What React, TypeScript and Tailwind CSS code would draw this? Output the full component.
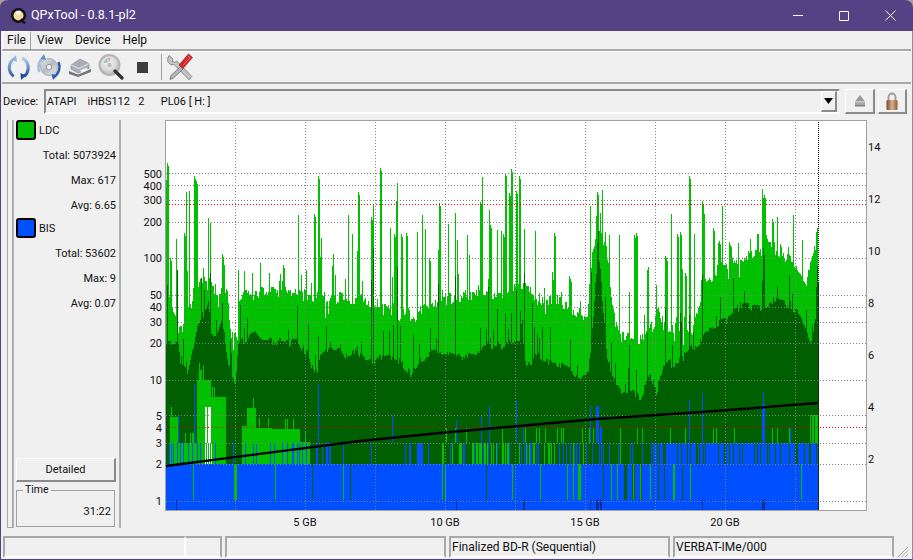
import React from "react";

const font = { light: "#00c000", dark: "#005f00", blue: "#0050ff", navy: "#0a2f96" };

// pseudo random, fixed seed so the plot stays the same on each run
let seed = 20240611;
const rnd = () => {
  seed = (seed * 1664525 + 1013904223) >>> 0;
  return seed / 4294967296;
};

const lerp = (pts: number[][], x: number) => {
  for (let i = 1; i < pts.length; i++) {
    if (x <= pts[i][0]) {
      const [x0, y0] = pts[i - 1];
      const [x1, y1] = pts[i];
      return y0 + ((y1 - y0) * (x - x0)) / (x1 - x0 || 1);
    }
  }
  return pts[pts.length - 1][1];
};

const lightBody = [
  [166, 292], [170, 305], [175, 315], [179, 332], [182, 330], [186, 310], [192, 300], [194, 286], [200, 282], [208, 274],
  [212, 290], [222, 288], [228, 298], [230, 332], [237, 336], [238, 302], [245, 296], [260, 292], [280, 292], [300, 294],
  [310, 297], [340, 297], [350, 301], [365, 300], [385, 306], [395, 322], [405, 308], [412, 322], [420, 308], [440, 301],
  [470, 294], [485, 293], [500, 293], [515, 288], [525, 288], [535, 295], [540, 303], [555, 298], [565, 305], [580, 313],
  [586, 322], [589, 290], [592, 250], [598, 232], [605, 240], [608, 262], [612, 305], [620, 337], [640, 340], [650, 332],
  [658, 312], [668, 334], [680, 320], [690, 338], [700, 300], [710, 278], [720, 266], [740, 258], [760, 254], [765, 240],
  [770, 240], [775, 250], [790, 260], [800, 272], [806, 282], [812, 262], [818, 232],
];

const darkBody = [
  [166, 343], [178, 343], [180, 368], [188, 372], [192, 352], [197, 325], [208, 303], [211, 336], [216, 336], [222, 318],
  [228, 368], [235, 380], [238, 342], [245, 341], [255, 331], [262, 342], [298, 343], [308, 355], [315, 378], [320, 356],
  [330, 346], [340, 346], [346, 357], [355, 351], [365, 362], [385, 358], [400, 360], [410, 375], [420, 358], [440, 351],
  [455, 355], [475, 358], [480, 346], [500, 345], [520, 340], [526, 368], [535, 355], [545, 360], [560, 366], [570, 370],
  [580, 380], [588, 372], [590, 350], [594, 305], [597, 252], [600, 272], [603, 312], [606, 352], [612, 380], [620, 392],
  [640, 396], [650, 376], [656, 392], [663, 366], [680, 360], [700, 340], [710, 328], [720, 323], [730, 317], [740, 306],
  [760, 308], [775, 300], [790, 305], [800, 316], [810, 342], [815, 320], [818, 280],
];

const lightSpikes = [
  [166, 180], [167, 163], [170, 258], [176, 239], [184, 233], [186, 192], [189, 191], [194, 176], [196, 181], [208, 254], [210, 223],
  [222, 254], [283, 265], [298, 215], [301, 275], [314, 214], [318, 176], [333, 254], [348, 215], [352, 234], [358, 192],
  [371, 217], [373, 204], [380, 168], [390, 228], [394, 234], [396, 201], [397, 183], [401, 234], [406, 233], [417, 232],
  [422, 215], [425, 229], [429, 258], [438, 250], [439, 203], [448, 224], [455, 213], [457, 240], [467, 235], [480, 202],
  [482, 177], [489, 210], [490, 225], [497, 230], [501, 231], [503, 234], [505, 173], [509, 193], [511, 169], [516, 191],
  [519, 176], [524, 229], [535, 231], [554, 233], [570, 279], [590, 206], [597, 192], [609, 235], [619, 235], [629, 292],
  [634, 235], [636, 233], [648, 267], [647, 270], [656, 285], [665, 256], [666, 258], [671, 214], [677, 234], [680, 232],
  [685, 273], [689, 176], [694, 234], [702, 201], [703, 211], [713, 228], [719, 241], [729, 242], [757, 234], [763, 198],
  [764, 195], [765, 198], [772, 219], [780, 244], [816, 232], [817, 228],
];

const darkSpikes = [
  [167, 285], [177, 270], [210, 273], [222, 303], [371, 280], [373, 248], [397, 267], [438, 284], [455, 276], [480, 328],
  [488, 287], [505, 313], [511, 313], [516, 290], [524, 273], [532, 303], [570, 340], [591, 272], [597, 243], [605, 297],
  [629, 345], [636, 370], [647, 333], [665, 308], [672, 345], [680, 313], [689, 315], [702, 275], [720, 297], [763, 248],
  [764, 255], [792, 294], [806, 310], [817, 280], [818, 282],
];

const blueSpikes = [
  [194, 384], [178, 416], [318, 384], [392, 415], [456, 420], [481, 415], [489, 405], [516, 400], [523, 426], [590, 406],
  [596, 406], [597, 406], [598, 406], [600, 426], [601, 426], [689, 400], [702, 393], [762, 405], [763, 392], [764, 405], [790, 427],
];

const greenStripes: [number, string][] = [
  [193, font.light], [234, font.light], [235, font.light], [236, font.light], [275, font.light], [312, font.dark], [343, font.light],
  [350, font.dark], [442, font.light], [445, font.light], [486, font.dark], [512, font.light], [540, font.light], [567, font.light],
  [573, font.light], [578, font.light], [579, font.light], [580, font.light], [603, font.dark], [611, font.light], [617, font.light],
  [624, font.dark], [625, font.dark], [626, font.dark], [632, font.dark], [633, font.light], [634, font.dark], [640, font.light],
  [641, font.dark], [650, font.light], [658, font.dark], [664, font.dark], [673, font.light], [674, font.light], [682, font.dark],
  [690, font.light], [801, font.light],
];

const buildLayers = () => {
  const p: Record<string, string> = { light: "", dark: "", patch: "", blue: "", white: "" };
  const col = (k: string, x: number, top: number, bottom: number) => {
    p[k] += `M${x + 0.5} ${Math.round(top)}V${Math.round(bottom)}`;
  };
  let jl = 0;
  for (let x = 166; x < 818; x++) {
    if (rnd() < 0.7) jl = (rnd() - 0.5) * 12;
    let top = lerp(lightBody, x) + jl;
    const r = rnd();
    if (r < 0.1) top -= rnd() * 22;
    else if (r < 0.18) top += rnd() * 18;
    else if (r < 0.205) top -= 20 + rnd() * 40;
    col("light", x, top, 510);
  }
  lightSpikes.forEach(([x, y]) => {
    col("light", x, y, 510);
    if (rnd() < 0.45) col("light", x + 1, y + 3, 510);
  });
  let jd = 0;
  for (let x = 166; x < 818; x++) {
    if (rnd() < 0.5) jd = (rnd() - 0.5) * 9;
    let top = lerp(darkBody, x) + jd;
    if (rnd() < 0.1) top -= 8 + rnd() * 30;
    col("dark", x, top, 510);
  }
  darkSpikes.forEach(([x, y]) => col("dark", x, y, 510));

  // low light patches sitting on the dark part
  const patches = [
    [170, 178, 417], [178, 197, 443], [197, 211, 380], [211, 226, 397], [242, 247, 426], [247, 256, 408], [256, 272, 428],
    [272, 300, 429], [300, 310, 442],
  ];
  patches.forEach(([a, b, y]) => {
    for (let x = a; x < b; x++) col("patch", x, y + (rnd() < 0.15 ? -10 : 0), 464);
  });
  col("patch", 199, 363, 400);
  col("patch", 203, 365, 400);
  for (let x = 205; x < 211; x++) if (x !== 207) col("white", x, 407, 443);
  for (let x = 204; x < 212; x++) if (x % 2) col("white", x, 443, 464);

  // band between 2 and 3, mix changes along the disc
  for (let x = 166; x < 818; x++) {
    const r = rnd();
    if (x < 310) {
      if (r < 0.14) col("blue", x, 443, 464);
    } else if (x < 440) {
      if (r < 0.12) col("blue", x, 443, 464);
    } else if (x < 560) {
      if (r < 0.32) col("patch", x, 443, 464);
      else if (r < 0.42) col("blue", x, 443, 464);
    } else if (x < 650) {
      if (r < 0.24) col("blue", x, 443, 464);
      else if (r < 0.29) col("patch", x, 443, 464);
    } else {
      if (r < 0.82) col("blue", x, 443, 464);
      else if (x > 705 && x < 712) col("patch", x, 443, 464);
    }
    if (x > 440 && rnd() < 0.05) col("patch", x, 428, 443);
  }
  [810, 812, 813, 815, 816, 817].forEach((x) => col("patch", x, 415, 443));
  blueSpikes.forEach(([x, y]) => col("blue", x, y, 443));
  for (let x = 166; x < 818; x++) col("blue", x, 464, 510);
  return p;
};

const layers = buildLayers();

const hLines = [501, 464, 443, 415, 380, 343, 322, 307, 295, 258, 222, 200, 185, 173];
const vLines = [235, 305, 375, 445, 515, 585, 655, 725, 795];
const leftAxis: [string, number][] = [
  ["1", 501], ["2", 464], ["3", 443], ["4", 428], ["5", 416], ["10", 380], ["20", 343], ["30", 322], ["40", 307], ["50", 295],
  ["100", 258], ["200", 222], ["300", 200], ["400", 186], ["500", 174],
];
const rightAxis: [string, number][] = [["14", 147], ["12", 199], ["10", 251], ["8", 303], ["6", 355], ["4", 407], ["2", 459]];
const bottomAxis: [string, number][] = [["5 GB", 305], ["10 GB", 445], ["15 GB", 585], ["20 GB", 725]];
const navyTicks = [176, 456, 523, 524, 590, 596, 597, 598, 600, 601, 702, 762, 763, 764];

function Plot() {
  // svg sits at page x=122, y=118
  return (
    <svg width="760" height="416" viewBox="122 118 760 416" className="block shrink-0">
      <rect x="165.5" y="120.5" width="701" height="390" fill="#ffffff" stroke="#a0a0a0" />
      <g shapeRendering="crispEdges" fill="none" strokeWidth="1">
        <path d={layers.light} stroke={font.light} />
        <path d={layers.dark} stroke={font.dark} />
        <path d={layers.patch} stroke={font.light} />
        <path d={layers.white} stroke="#ffffff" />
        <path d={layers.blue} stroke={font.blue} />
        {greenStripes.map(([x, c]) => (
          <line key={x} x1={x + 0.5} x2={x + 0.5} y1="464" y2="500" stroke={c} />
        ))}
        {navyTicks.map((x) => (
          <line key={x} x1={x + 0.5} x2={x + 0.5} y1="500" y2="510" stroke={font.navy} />
        ))}
        {vLines.map((x) => (
          <line key={x} x1={x + 0.5} x2={x + 0.5} y1="122" y2="510" stroke="#808080" strokeDasharray="1 2" />
        ))}
        {hLines.map((y) => (
          <line key={y} x1="166" x2="866" y1={y + 0.5} y2={y + 0.5} stroke="#808080" strokeDasharray="1 2" />
        ))}
        <line x1="166" x2="866" y1="204.5" y2="204.5" stroke="#e00000" strokeDasharray="1 2" />
        <line x1="166" x2="866" y1="427.5" y2="427.5" stroke="#e00000" strokeDasharray="1 2" />
        <line x1="818.5" x2="818.5" y1="122" y2="510" stroke="#000000" strokeDasharray="1 1" />
      </g>
      <polyline points="166,466 360,441 440,433 597,419 702,412 818,403" fill="none" stroke="#000000" strokeWidth="2.4" />
      <g fontSize="11" fill="#111111">
        {leftAxis.map(([t, y]) => (
          <text key={t} x="162" y={y + 4} textAnchor="end">{t}</text>
        ))}
        {rightAxis.map(([t, y]) => (
          <text key={t} x="868" y={y + 4}>{t}</text>
        ))}
        {bottomAxis.map(([t, x]) => (
          <text key={t} x={x} y="526" textAnchor="middle">{t}</text>
        ))}
      </g>
    </svg>
  );
}

function AppIcon() {
  return (
    <svg width="18" height="18" viewBox="0 0 18 18" className="shrink-0">
      <circle cx="8.5" cy="8.5" r="7.5" fill="#111111" />
      <circle cx="8.5" cy="8.5" r="5" fill="#f4d9a0" />
      <path d="M5.500 5.500a4.200 4.200 0 0 1 5.500-.5l-2 3.500z" fill="#ffffff" />
      <path d="M11 12l4 4.500" stroke="#111111" strokeWidth="2.400" />
    </svg>
  );
}

function RefreshIcon() {
  return (
    <svg width="26" height="28" viewBox="0 0 26 28">
      <defs>
        <linearGradient id="rfA" x1="0" y1="0" x2="0" y2="1">
          <stop offset="0" stopColor="#a8c8ea" />
          <stop offset="1" stopColor="#2f5fae" />
        </linearGradient>
        <linearGradient id="rfB" x1="0" y1="0" x2="0" y2="1">
          <stop offset="0" stopColor="#b9d2ee" />
          <stop offset="1" stopColor="#1d4a9c" />
        </linearGradient>
      </defs>
      <path d="M9 5C3.500 7.500 1.500 15 5 20.500c.8 1.200 1.600 2 2.800 2.700" fill="none" stroke="url(#rfA)" strokeWidth="3" />
      <path d="M10 2l1 7-5-2z" fill="#8fb5e0" />
      <path d="M16 5c5.500 2 8 9 5 15-.8 1.500-1.800 2.500-3 3.200" fill="none" stroke="url(#rfB)" strokeWidth="3" />
      <path d="M15 27l-.5-7 5.500 2.500z" fill="#1d4a9c" />
    </svg>
  );
}

function DiscRefreshIcon() {
  return (
    <svg width="26" height="28" viewBox="0 0 26 28">
      <defs>
        <linearGradient id="dsA" x1="0" y1="0" x2="1" y2="1">
          <stop offset="0" stopColor="#e6e6e6" />
          <stop offset="0.5" stopColor="#b8bcc4" />
          <stop offset="1" stopColor="#eeeeee" />
        </linearGradient>
      </defs>
      <circle cx="13" cy="14" r="8.500" fill="url(#dsA)" stroke="#9a9a9a" strokeWidth="0.700" />
      <circle cx="13" cy="14" r="2.600" fill="#f4f4f4" stroke="#888888" strokeWidth="0.800" />
      <path d="M9 4C3.500 6 .8 13 3.500 19" fill="none" stroke="#9cbde2" strokeWidth="2.400" />
      <path d="M8 1l2 6-5.500-1z" fill="#5f8ccb" />
      <path d="M17 24c5.500-2 8-9 5.500-15" fill="none" stroke="#2d5aa8" strokeWidth="2.400" />
      <path d="M17 27l-1.500-6 5.500 1.500z" fill="#2d5aa8" />
    </svg>
  );
}

function DriveIcon() {
  return (
    <svg width="26" height="24" viewBox="0 0 26 24">
      <path d="M4 10L13 4l9 4.500v5L11 18 4 14z" fill="#a9adb6" stroke="#85888f" strokeWidth="0.600" />
      <path d="M4 10l8 3.500 10-5" fill="none" stroke="#d8dbe0" strokeWidth="1.200" />
      <path d="M2 16l9 3.500 13-5.500v3l-13 5-9-3z" fill="#75777c" />
      <path d="M13 15.500l6-2.500 3 1.500-7 3z" fill="#f5f5f5" />
    </svg>
  );
}

function MagnifierIcon() {
  return (
    <svg width="26" height="28" viewBox="0 0 26 28">
      <defs>
        <radialGradient id="mgA" cx="0.45" cy="0.4" r="0.7">
          <stop offset="0" stopColor="#efefef" />
          <stop offset="0.5" stopColor="#dcdcdc" />
          <stop offset="1" stopColor="#a4a4a4" />
        </radialGradient>
      </defs>
      <circle cx="11.500" cy="12" r="10" fill="url(#mgA)" stroke="#b4b4b4" strokeWidth="2" />
      <path d="M5.500 10a6.500 6.500 0 0 1 3-4l2 3.500z" fill="#9fc5a6" />
      <path d="M8.500 5.500a6.500 6.500 0 0 1 4-.8l-.8 4z" fill="#d9a6c2" />
      <circle cx="11.500" cy="12" r="2.200" fill="#c0c0c0" />
      <path d="M17 18l7 7" stroke="#333333" strokeWidth="3.200" strokeLinecap="round" />
    </svg>
  );
}

function ToolsIcon() {
  return (
    <svg width="26" height="28" viewBox="0 0 26 28">
      <path d="M2 2.500l4 3.500-.6 2.500 2.500.8 1.900-1.300 15 15.500-2.800 3.200L7 11.500l-3 .3L.8 8.500.8 5z" fill="#c2c4c8" stroke="#707276" strokeWidth="0.800" />
      <path d="M14 13l2.500 2.500-10 9.500-3.500 1.500 1-4z" fill="#b4b6ba" stroke="#6a6c70" strokeWidth="0.800" />
      <path d="M21.500 1l4 3.500-9.500 11-4-3.500z" fill="#d8242a" stroke="#8f1216" strokeWidth="0.600" />
      <path d="M21 3l2 1.500-7 8" fill="none" stroke="#f07074" strokeWidth="1" />
    </svg>
  );
}

function EjectIcon() {
  return (
    <svg width="12" height="13" viewBox="0 0 12 13">
      <path d="M6 1l5 6.500H1z" fill="#9a9a9a" />
      <rect x="1" y="8.500" width="10" height="4" fill="#808080" />
      <rect x="1" y="9.500" width="10" height="1" fill="#d0d0d0" />
    </svg>
  );
}

function LockIcon() {
  return (
    <svg width="12" height="18" viewBox="0 0 12 18">
      <defs>
        <linearGradient id="lkA" x1="0" y1="0" x2="1" y2="0">
          <stop offset="0" stopColor="#7a4424" />
          <stop offset="0.5" stopColor="#d9b48c" />
          <stop offset="1" stopColor="#8e5a34" />
        </linearGradient>
      </defs>
      <path d="M2.500 8V5a3.500 3.500 0 0 1 7 0v3" fill="none" stroke="#9a9a9a" strokeWidth="1.800" />
      <rect x="0.500" y="8" width="11" height="10" rx="1" fill="url(#lkA)" />
    </svg>
  );
}

function StatLine({ text }: { text: string }) {
  return <div className="flex h-[25px] items-center justify-end pr-[2px]">{text}</div>;
}

function Swatch({ color, label }: { color: string; label: string }) {
  return (
    <div className="flex h-[20px] items-center gap-[3px]">
      <span className={`h-[20px] w-[20px] rounded-[3px] border-2 border-black ${color}`} />
      <span>{label}</span>
    </div>
  );
}

function Raised({ className, children }: { className: string; children?: React.ReactNode }) {
  return (
    <div className={`flex items-center justify-center border border-t-white border-l-white border-b-2 border-r-2 border-b-[#8a8a8a] border-r-[#8a8a8a] bg-[#f0f0f0] ${className}`}>
      {children}
    </div>
  );
}

export default function App() {
  return (
    <div className="h-[560px] w-[913px] overflow-hidden bg-[#a99f92] text-[11px] leading-none text-[#111111]" style={{ fontFamily: "Roboto, sans-serif" }}>
      <div className="flex h-full flex-col rounded-t-[8px] border-x border-b border-l-[#544384] border-r-[#8f8aa5] border-b-[#544384] bg-[#f0f0f0] px-px pb-px">
        {/* title bar */}
        <div className="-mx-[2px] flex h-[31px] shrink-0 items-center rounded-t-[8px] bg-[#544384] pl-[10px] text-white">
          <AppIcon />
          <span className="ml-[3px] text-[12.5px]">QPxTool - 0.8.1-pl2</span>
          <div className="ml-auto flex h-full items-center">
            <span className="flex w-[46px] justify-center">
              <span className="h-px w-[10px] bg-white" />
            </span>
            <span className="flex w-[46px] justify-center">
              <span className="h-[10px] w-[10px] rounded-[1px] border border-white" />
            </span>
            <span className="flex w-[46px] justify-center">
              <svg width="11" height="11" viewBox="0 0 11 11" stroke="#ffffff" strokeWidth="1">
                <path d="M.5.5l10 10M10.500.5l-10 10" />
              </svg>
            </span>
          </div>
        </div>

        {/* menu */}
        <div className="flex h-[20px] shrink-0 items-center border-b-2 border-b-[#a8a8a8] text-[12px]">
          <span className="flex h-[19px] w-[29px] items-center justify-center border border-[#a0a0a0] border-t-white border-l-white bg-[#f0f0f0]">File</span>
          <span className="ml-[6px]">View</span>
          <span className="ml-[12px]">Device</span>
          <span className="ml-[12px]">Help</span>
        </div>

        {/* toolbar */}
        <div className="flex h-[33px] shrink-0 items-center border-t border-t-white border-b-2 border-b-[#a8a8a8] pl-[3px]">
          <span className="flex w-[28px] justify-center"><RefreshIcon /></span>
          <span className="ml-[2px] flex w-[28px] justify-center"><DiscRefreshIcon /></span>
          <span className="ml-[3px] flex w-[28px] justify-center"><DriveIcon /></span>
          <span className="ml-[3px] flex w-[28px] justify-center"><MagnifierIcon /></span>
          <span className="ml-[3px] flex w-[28px] justify-center">
            <span className="h-[11px] w-[11px] bg-[#3c3c3c]" />
          </span>
          <span className="ml-[5px] h-[26px] w-px bg-[#a0a0a0]" />
          <span className="ml-[4px] flex w-[28px] justify-center"><ToolsIcon /></span>
        </div>

        {/* device row */}
        <div className="flex h-[34px] shrink-0 items-center pl-[1px] pr-[4px]">
          <span className="w-[41px]">Device:</span>
          <div className="flex h-[25px] w-[799px] items-center border-2 border-[#8a8a8a] border-r-[#f0f0f0] border-b-white bg-[#f0f0f0] pl-[1px] pr-px">
            <span className="whitespace-pre">ATAPI    iHBS112   2      PL06 [ H: ]</span>
            <Raised className="ml-auto h-[21px] w-[16px]">
              <svg width="9" height="6" viewBox="0 0 9 6">
                <path d="M0 0h9L4.500 6z" fill="#000000" />
              </svg>
            </Raised>
          </div>
          <Raised className="ml-[5px] h-[25px] w-[30px]"><EjectIcon /></Raised>
          <Raised className="ml-[3px] h-[25px] w-[29px]"><LockIcon /></Raised>
        </div>

        {/* main */}
        <div className="flex min-h-0 flex-1">
          <div className="ml-[5px] mt-[2px] h-[408px] w-[6px] border border-[#a8a8a8] border-t-0" />
          <div className="mt-[2px] flex h-[408px] w-[108px] flex-col border-l border-r-2 border-[#b0b0b0] pl-[2px] pr-[1px]">
            <Swatch color="bg-[#00c000]" label="LDC" />
            <div className="mt-[3px]">
              <StatLine text="Total: 5073924" />
              <StatLine text="Max: 617" />
              <StatLine text="Avg: 6.65" />
            </div>
            <div><Swatch color="bg-[#0050ff]" label="BIS" /></div>
            <div className="mt-[3px]">
              <StatLine text="Total: 53602" />
              <StatLine text="Max: 9" />
              <StatLine text="Avg: 0.07" />
            </div>
            <Raised className="mt-auto h-[24px] w-[100px]">Detailed</Raised>
            <fieldset className="mb-[1px] mt-[3px] h-[42px] w-[99px] border border-[#a0a0a0] pl-[4px] pr-[3px]">
              <legend className="ml-[2px] px-[2px] text-[10.5px]">Time</legend>
              <div className="mt-[10px] text-right">31:22</div>
            </fieldset>
          </div>
          <div className="ml-px">
            <Plot />
          </div>
        </div>

        {/* status bar */}
        <div className="flex h-[22px] shrink-0 items-stretch pl-[1px] pr-[2px]">
          <div className="h-full w-[183px] border-2 border-[#a8a8a8] border-r-white border-b-white" />
          <div className="h-full w-[36px] border-t-2 border-r-2 border-t-[#a8a8a8] border-r-[#a8a8a8] border-b-2 border-b-white" />
          <div className="ml-[3px] h-full w-[221px] border-2 border-[#a8a8a8] border-b-white" />
          <div className="ml-[3px] flex h-full w-[221px] items-center border-2 border-[#a8a8a8] border-b-white pl-[1px] text-[12px]">Finalized BD-R (Sequential)</div>
          <div className="ml-[3px] flex h-full w-[221px] items-center border-2 border-[#a8a8a8] border-b-white pl-[1px] text-[12px]">VERBAT-IMe/000</div>
          <svg width="12" height="12" viewBox="0 0 12 12" className="ml-auto self-end" stroke="#a8a8a8">
            <path d="M11 1L1 11M11 4.500L4.500 11M11 8L8 11" />
          </svg>
        </div>
      </div>
    </div>
  );
}
